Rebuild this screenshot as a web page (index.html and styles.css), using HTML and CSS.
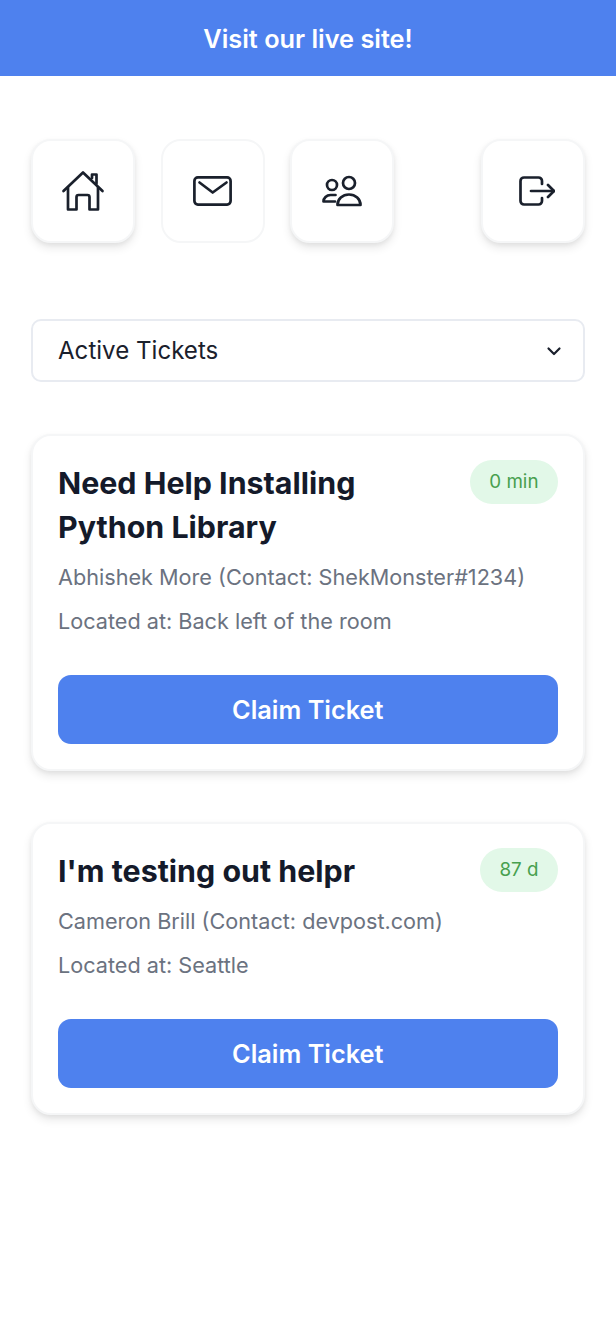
FILE: index.html
```html
<!DOCTYPE html>
<html lang="en">
<head>
<meta charset="utf-8">
<title>Helpr</title>
<link rel="stylesheet" href="styles.css">
</head>
<body>
<a class="banner" href="#">Visit our live site!</a>
<main class="content">
  <nav class="nav">
    <a class="nav-btn" href="#" aria-label="Home">
      <svg class="icon" viewBox="0 0 44 44" fill="none" stroke="#1a202c" stroke-width="2.7" stroke-linecap="round" stroke-linejoin="round"><path d="M2.500 22 22 3.500 41.500 22"/><path d="M7 18.500V40.500h8.500V28a2 2 0 0 1 2-2h9a2 2 0 0 1 2 2v12.500H37V18.500"/><path d="M31 9V5.500h4.500V14.500"/></svg>
    </a>
    <a class="nav-btn flat" href="#" aria-label="Messages">
      <svg class="icon" viewBox="0 0 44 44" fill="none" stroke="#1a202c" stroke-width="2.7" stroke-linecap="round" stroke-linejoin="round"><rect x="3.400" y="8.400" width="36.200" height="27.200" rx="3.500"/><path d="M8.500 13.500 21.700 23.500 35.500 13.500"/></svg>
    </a>
    <a class="nav-btn" href="#" aria-label="Team">
      <svg class="icon" viewBox="0 0 44 44" fill="none" stroke="#1a202c" stroke-width="2.7" stroke-linecap="round" stroke-linejoin="round"><circle cx="12" cy="16" r="5"/><circle cx="29" cy="14" r="6"/><path d="M15 32.500H3.500c0-3.500 3-6.500 7-6.500h5"/><path d="M17.500 36c0-6 5-10.500 11.500-10.500S40.500 30 40.500 36z"/></svg>
    </a>
    <a class="nav-btn logout" href="#" aria-label="Log out">
      <svg class="icon" viewBox="0 0 44 44" fill="none" stroke="#1a202c" stroke-width="2.7" stroke-linecap="round" stroke-linejoin="round"><path d="M31 15v-3a3.500 3.500 0 0 0-3.500-3.500H13a3.500 3.500 0 0 0-3.500 3.500v20a3.500 3.500 0 0 0 3.500 3.500h14.500A3.500 3.500 0 0 0 31 32v-3"/><path d="M20 22h23"/><path d="M37 16l6 6-6 6"/></svg>
    </a>
  </nav>

  <div class="select">
    <span>Active Tickets</span>
    <svg class="chevron" viewBox="0 0 16 16" fill="none" stroke="#1a202c" stroke-width="2.200" stroke-linecap="round" stroke-linejoin="round"><path d="M2.500 5.500 8 11l5.500-5.500"/></svg>
  </div>

  <article class="card">
    <header class="card-head">
      <h2 class="title">Need Help Installing Python Library</h2>
      <span class="badge">0 min</span>
    </header>
    <p class="meta first">Abhishek More (Contact: ShekMonster#1234)</p>
    <p class="meta">Located at: Back left of the room</p>
    <button class="claim">Claim Ticket</button>
  </article>

  <article class="card">
    <header class="card-head">
      <h2 class="title">I'm testing out helpr</h2>
      <span class="badge">87 d</span>
    </header>
    <p class="meta first">Cameron Brill (Contact: devpost.com)</p>
    <p class="meta">Located at: Seattle</p>
    <button class="claim">Claim Ticket</button>
  </article>
</main>
</body>
</html>
```

FILE: styles.css
```css
* { box-sizing: border-box; }
html, body { margin: 0; padding: 0; background: #fff; }
body { font-family: Inter, "Liberation Sans", sans-serif; color: #1a202c; min-height: 100vh; }

.banner {
  display: flex;
  align-items: center;
  justify-content: center;
  height: 76px;
  background: #4e81ee;
  color: #fff;
  font-size: 25.300px;
  font-weight: 600;
  text-decoration: none;
}

.content { padding: 63px 31px 40px; }

.nav { display: flex; gap: 25.500px; }
.nav-btn {
  display: flex;
  align-items: center;
  justify-content: center;
  width: 104px;
  height: 103.500px;
  background: #fff;
  border: 2px solid #f5f6f7;
  border-radius: 20px;
  box-shadow: 0 5px 10px rgba(0, 0, 0, 0.09), 0 2px 4px rgba(0, 0, 0, 0.05);
}
.nav-btn.flat { box-shadow: none; }
.nav-btn.logout { margin-left: auto; }
.icon { width: 44px; height: 44px; display: block; }

.select {
  display: flex;
  align-items: center;
  justify-content: space-between;
  height: 63px;
  margin-top: 76.500px;
  padding: 0 21px 0 25px;
  border: 2px solid #e8ebf1;
  border-radius: 10px;
  font-size: 24.100px;
  background: #fff;
}
.chevron { width: 16px; height: 16px; display: block; }

.card {
  margin-top: 51.500px;
  padding: 25px 25.500px 25.500px 25px;
  background: #fff;
  border: 2px solid #f5f6f7;
  border-radius: 20px;
  box-shadow: 0 5px 10px rgba(0, 0, 0, 0.09), 0 2px 4px rgba(0, 0, 0, 0.05);
}
.card + .card { margin-top: 50.500px; }
.card-head { display: flex; align-items: flex-start; justify-content: space-between; gap: 26px; }
.title {
  margin: 0;
  font-size: 30.400px;
  line-height: 44px;
  font-weight: 700;
  color: #141a2a;
  max-width: 340px;
}
.badge {
  flex: none;
  display: block;
  height: 44px;
  margin-top: -1px;
  padding: 0 19px;
  border-radius: 22px;
  background: #e2f8e8;
  color: #48a04f;
  font-size: 18.800px;
  line-height: 44px;
  font-weight: 400;
}
.meta {
  margin: 0;
  font-size: 21.650px;
  line-height: 44px;
  color: #6b7280;
}
.meta.first { margin-top: 6.500px; }
.claim {
  display: block;
  width: 100%;
  height: 69px;
  margin-top: 31.500px;
  border: 0;
  border-radius: 13px;
  background: #4e81ee;
  color: #fff;
  font-family: inherit;
  font-size: 25.300px;
  font-weight: 600;
}
```
